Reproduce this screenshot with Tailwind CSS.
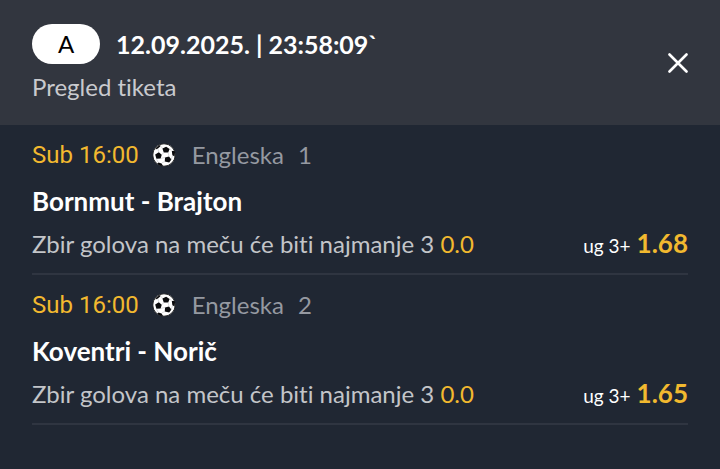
<!DOCTYPE html>
<html lang="sr-Latn">
  <head>
    <meta charset="UTF-8" />
    <meta name="viewport" content="width=device-width, initial-scale=1" />
    <title>Pregled tiketa</title>
    <script src="https://cdn.jsdelivr.net/npm/@tailwindcss/browser@4"></script>
  </head>
  <body class="min-h-screen bg-[#202733] font-['Lato','Noto_Sans',sans-serif] text-white [font-variant-ligatures:none]">
    <!-- Football icon, shared by all rows -->
    <svg class="hidden">
      <symbol id="ball" viewBox="0 0 24 24">
        <clipPath id="ball-clip"><circle cx="12" cy="12" r="10.8" /></clipPath>
        <circle cx="12" cy="12" r="11.2" fill="#fff" stroke="#0b0b0d" stroke-width="0.8" />
        <g clip-path="url(#ball-clip)" fill="#0b0b0d">
          <path d="M10.4 5.6 14.2 3.8 17.6 6 16.2 9.4 11.8 9.6Z" />
          <path d="M3.2 11.4 6.8 9.2 9.8 11.8 8.6 15.6 4.4 15.8Z" />
          <path d="M13 14.4 17 13.4 19.4 16.4 17.2 19.6 12.8 18.6Z" />
          <path d="M19.8 8 22 7.8 23 9 22.6 13.4 20.4 12.2Z" />
          <path d="M4.4 4.4 8.2 1.8 8.4 3.2 6 5.4 3.6 6.4Z" />
          <path d="M6.4 19.6 9.6 20.4 11 23 7.6 22.4 5.4 20.8Z" />
        </g>
        <path
          d="M11.8 9.4 9.8 11.8M16 9.2 17 13.4M8.6 15.4 13.4 14.4M17.4 6 19.6 7.6M6.8 9.2 6 6M8.8 3.2 10.6 5.6M10 19.8 13 18.4M4.4 15.8 6 19M20.6 12.6 19.2 16.4"
          fill="none" stroke="#b4b6ba" stroke-width="0.5"
        />
      </symbol>
    </svg>

    <header class="flex items-center justify-between bg-[#32363f] px-8 pt-6 pb-5">
      <div>
        <div class="flex items-center gap-4">
          <span class="flex h-10 w-17 items-center justify-center rounded-full bg-white text-2xl text-black">A</span>
          <h1 class="text-[25px] leading-10 font-bold">12.09.2025. | 23:58:09`</h1>
        </div>
        <p class="mt-[5px] text-2xl leading-9 text-[#c9cace]">Pregled tiketa</p>
      </div>
      <button type="button" aria-label="Zatvori" class="mb-1 size-5">
        <svg viewBox="0 0 20 20" class="size-5" fill="none" stroke="#fff" stroke-width="2.6" stroke-linecap="round">
          <path d="M1.5 1.5 18.5 18.5M18.5 1.5 1.5 18.5" />
        </svg>
      </button>
    </header>

    <main class="px-8">
      <article class="border-b-2 border-[#2f3541] py-3">
        <div class="flex h-9 items-center">
          <time class="font-['Roboto',sans-serif] text-2xl text-[#f2b92f]">Sub 16:00</time>
          <svg class="mr-4 ml-[13px] size-6"><use href="#ball" /></svg>
          <span class="flex gap-3.5 text-2xl text-[#9599a1]"><span>Engleska</span><span>1</span></span>
        </div>
        <h2 class="mt-2.5 text-[26px] leading-9 font-bold">Bornmut - Brajton</h2>
        <div class="mt-1.5 flex h-9 items-baseline justify-between">
          <p class="text-2xl leading-9 text-[#c3c5c9]">
            Zbir golova na meču će biti najmanje 3 <span class="text-[#f2b92f]">0.0</span>
          </p>
          <p class="flex items-baseline gap-1.5 leading-9">
            <span class="text-[19px]">ug 3+</span>
            <strong class="text-[26px] font-bold text-[#f2b92f]">1.68</strong>
          </p>
        </div>
      </article>

      <article class="border-b-2 border-[#2f3541] py-3">
        <div class="flex h-9 items-center">
          <time class="font-['Roboto',sans-serif] text-2xl text-[#f2b92f]">Sub 16:00</time>
          <svg class="mr-4 ml-[13px] size-6"><use href="#ball" /></svg>
          <span class="flex gap-3.5 text-2xl text-[#9599a1]"><span>Engleska</span><span>2</span></span>
        </div>
        <h2 class="mt-2.5 text-[26px] leading-9 font-bold">Koventri - Norič</h2>
        <div class="mt-1.5 flex h-9 items-baseline justify-between">
          <p class="text-2xl leading-9 text-[#c3c5c9]">
            Zbir golova na meču će biti najmanje 3 <span class="text-[#f2b92f]">0.0</span>
          </p>
          <p class="flex items-baseline gap-1.5 leading-9">
            <span class="text-[19px]">ug 3+</span>
            <strong class="text-[26px] font-bold text-[#f2b92f]">1.65</strong>
          </p>
        </div>
      </article>
    </main>
  </body>
</html>
